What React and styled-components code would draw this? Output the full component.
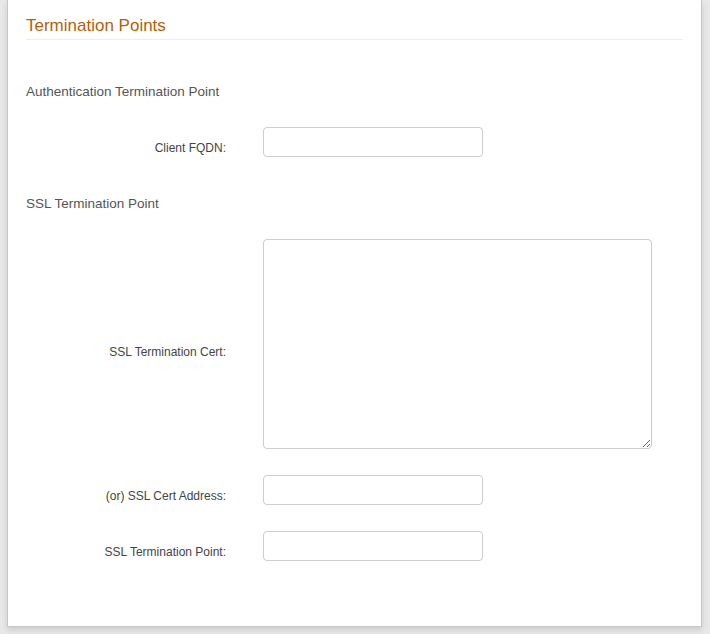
import React from "react";
import styled, { createGlobalStyle } from "styled-components";

const Global = createGlobalStyle`
  html, body { margin: 0; padding: 0; background: #e8e8e8; }
  body { font-family: "Liberation Sans", Arial, sans-serif; }
  * { box-sizing: border-box; }
`;

const Page = styled.div`
  width: 710px;
  height: 634px;
  padding-left: 7px;
  overflow: hidden;
`;

const Panel = styled.div`
  width: 695px;
  height: 627px;
  background: #fff;
  border: 1px solid #c6c6c6;
  border-top: none;
  box-shadow: 0 3px 6px rgba(0, 0, 0, 0.12);
  padding: 16px 18px 0 18px;
`;

const Title = styled.h2`
  margin: 0;
  font-size: 17px;
  line-height: 20px;
  font-weight: normal;
  color: #b5600a;
  padding-bottom: 3px;
  border-bottom: 1px solid #eeeeee;
`;

const Section = styled.section`
  margin-top: ${(p) => p.$top}px;
`;

const SectionTitle = styled.h3`
  margin: 0 0 -1px 0;
  font-size: 13.5px;
  line-height: 20px;
  font-weight: normal;
  color: #555;
`;

const Row = styled.div`
  display: grid;
  grid-template-columns: 200px 1fr;
  column-gap: 37px;
  align-items: center;
  margin-top: 26px;
`;

const Label = styled.label`
  text-align: right;
  font-size: 12px;
  line-height: 14px;
  color: #444;
  padding-top: ${(p) => p.$shift * 2}px;
`;

const Input = styled.input`
  width: 220px;
  height: 30px;
  border: 1px solid #cccccc;
  border-radius: 4px;
  background: #fff;
  font-family: inherit;
  font-size: 12px;
  padding: 4px 8px;
  outline: none;
`;

const TextArea = styled.textarea`
  display: block;
  width: 389px;
  height: 210px;
  border: 1px solid #cccccc;
  border-radius: 4px;
  background: #fff;
  font-family: inherit;
  font-size: 12px;
  padding: 4px 8px;
  outline: none;
  resize: both;
`;

export default function App() {
  return (
    <>
      <Global />
      <Page>
        <Panel>
          <Title>Termination Points</Title>
          <Section $top={42}>
            <SectionTitle>Authentication Termination Point</SectionTitle>
            <Row>
              <Label $shift={6}>Client FQDN:</Label>
              <Input type="text" />
            </Row>
          </Section>
          <Section $top={37}>
            <SectionTitle>SSL Termination Point</SectionTitle>
            <Row>
              <Label $shift={8}>SSL Termination Cert:</Label>
              <TextArea />
            </Row>
            <Row>
              <Label $shift={6}>(or) SSL Cert Address:</Label>
              <Input type="text" />
            </Row>
            <Row>
              <Label $shift={6}>SSL Termination Point:</Label>
              <Input type="text" />
            </Row>
          </Section>
        </Panel>
      </Page>
    </>
  );
}
